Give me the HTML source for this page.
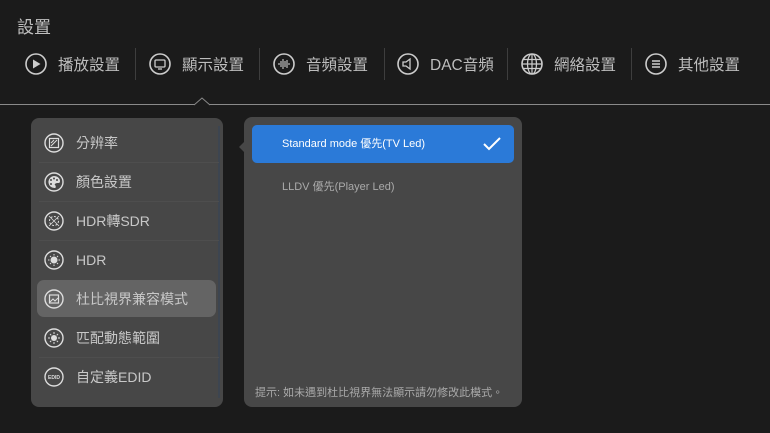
<!DOCTYPE html>
<html><head><meta charset="utf-8"><style>
*{margin:0;padding:0;box-sizing:border-box}
body{width:770px;height:433px;background:#1b1b1b;font-family:"Liberation Sans","Noto Sans CJK TC",sans-serif;position:relative;overflow:hidden;color:#ccc}
.t{position:absolute;left:17px;top:13px;font-size:17px;color:#c0c0c0}
.tab{position:absolute;top:52px;height:24px;display:flex;align-items:center;font-size:15.5px;color:#bdbdbd}
.tab svg{margin-right:11px}
.sep{position:absolute;top:48px;width:1px;height:32px;background:#3e3e3e}
.line{position:absolute;left:0;top:104px;width:770px;height:1px;background:#8a8a8a}
.p{position:absolute;background:#474747;border-radius:8px}
.row{position:absolute;left:6px;width:179px;height:37px;display:flex;align-items:center;font-size:14px;color:#c8c8c8}
.row svg{margin:0 12px 0 7px}
.row.sel{background:#646464;border-radius:7px}
.div{position:absolute;left:8px;width:180px;height:1px;background:#4e4e4e}
</style></head><body>
<div class="t">設置</div>
<div class="tab" style="left:25px"><svg width="22" height="22" viewBox="0 0 22 22"><circle cx="11" cy="11" r="10" fill="none" stroke="#ccc" stroke-width="1.6"/><path d="M8 6.5L15.5 11L8 15.5Z" fill="#ccc"/></svg>播放設置</div>
<div class="sep" style="left:135px"></div>
<div class="tab" style="left:149px"><svg width="22" height="22" viewBox="0 0 22 22"><circle cx="11" cy="11" r="10" fill="none" stroke="#ccc" stroke-width="1.6"/><rect x="6" y="7" width="10" height="7" rx="1" fill="none" stroke="#ccc" stroke-width="1.3"/><path d="M9 16h4" stroke="#ccc" stroke-width="1.3"/></svg>顯示設置</div>
<div class="sep" style="left:259px"></div>
<div class="tab" style="left:273px"><svg width="22" height="22" viewBox="0 0 22 22"><circle cx="11" cy="11" r="10" fill="none" stroke="#ccc" stroke-width="1.6"/><path d="M6 10v2M8 8v6M10 6v10M12 8v6M14 7v8M16 10v2" stroke="#ccc" stroke-width="1.1"/></svg>音頻設置</div>
<div class="sep" style="left:384px"></div>
<div class="tab" style="left:397px"><svg width="22" height="22" viewBox="0 0 22 22"><circle cx="11" cy="11" r="10" fill="none" stroke="#ccc" stroke-width="1.6"/><path d="M6 9h3l4-3v10l-4-3H6z" fill="none" stroke="#ccc" stroke-width="1.3"/></svg>DAC音頻</div>
<div class="sep" style="left:507px"></div>
<div class="tab" style="left:521px"><svg width="22" height="22" viewBox="0 0 22 22"><circle cx="11" cy="11" r="10" fill="none" stroke="#ccc" stroke-width="1.6"/><ellipse cx="11" cy="11" rx="4.5" ry="10" fill="none" stroke="#ccc" stroke-width="1.2"/><path d="M11 1v20M1 11h20M2.5 6.5h17M2.5 15.5h17" stroke="#ccc" stroke-width="1.2"/></svg>網絡設置</div>
<div class="sep" style="left:631px"></div>
<div class="tab" style="left:645px"><svg width="22" height="22" viewBox="0 0 22 22"><circle cx="11" cy="11" r="10" fill="none" stroke="#ccc" stroke-width="1.6"/><path d="M7 8h8M7 11h8M7 14h8" stroke="#ccc" stroke-width="1.5"/></svg>其他設置</div>
<div class="line"></div>
<svg style="position:absolute;left:194px;top:97px" width="16" height="9"><path d="M0 8L8 1L16 8" fill="#1b1b1b" stroke="#8a8a8a" stroke-width="1"/></svg>

<div class="p" style="left:31px;top:118px;width:192px;height:289px">
<div style="position:absolute;left:187px;top:8px;width:2px;height:272px;background:#3d4550"></div>
<div class="row" style="top:6px"><svg width="20" height="20" viewBox="0 0 20 20"><circle cx="10" cy="10" r="9" fill="none" stroke="#ddd" stroke-width="1.4"/><rect x="5.5" y="5.5" width="9" height="9" fill="none" stroke="#ddd" stroke-width="1.2"/><path d="M7 10l3-3M7 13l6-6" stroke="#ddd"/></svg>分辨率</div>
<div class="div" style="top:44px"></div>
<div class="row" style="top:45px"><svg width="20" height="20" viewBox="0 0 20 20"><circle cx="10" cy="10" r="9" fill="none" stroke="#ddd" stroke-width="1.4"/><path d="M10 4a6 6 0 1 0 1 12c1 0 1-2 0-3s1-2 3-2 2-1 2-2c0-3-3-5-6-5z" fill="#ddd"/><circle cx="7" cy="8" r="1" fill="#474747"/><circle cx="10" cy="6.5" r="1" fill="#474747"/><circle cx="13" cy="8" r="1" fill="#474747"/><circle cx="7" cy="12" r="1" fill="#474747"/></svg>顏色設置</div>
<div class="div" style="top:83px"></div>
<div class="row" style="top:84px"><svg width="20" height="20" viewBox="0 0 20 20"><circle cx="10" cy="10" r="9" fill="none" stroke="#ddd" stroke-width="1.4"/><circle cx="10" cy="10" r="4.5" fill="none" stroke="#ddd" stroke-dasharray="2 1.5"/><path d="M5 5l10 10M15 5L5 15" stroke="#ddd" stroke-width=".8"/></svg>HDR轉SDR</div>
<div class="div" style="top:122px"></div>
<div class="row" style="top:123px"><svg width="20" height="20" viewBox="0 0 20 20"><circle cx="10" cy="10" r="9" fill="none" stroke="#ddd" stroke-width="1.4"/><circle cx="10" cy="10" r="3.5" fill="#ddd"/><path d="M10 4v1.5M10 14.5V16M4 10h1.5M14.5 10H16M6 6l1 1M13 13l1 1M14 6l-1 1M6 14l1-1" stroke="#ddd"/></svg>HDR</div>
<div class="row sel" style="top:162px"><svg width="20" height="20" viewBox="0 0 20 20"><circle cx="10" cy="10" r="9" fill="none" stroke="#ddd" stroke-width="1.4"/><rect x="5.5" y="6" width="9" height="8" fill="none" stroke="#ddd" stroke-width="1.2"/><path d="M6 13l3-3 2 2 3-3" stroke="#ddd" fill="none"/></svg>杜比視界兼容模式</div>
<div class="row" style="top:201px"><svg width="20" height="20" viewBox="0 0 20 20"><circle cx="10" cy="10" r="9" fill="none" stroke="#ddd" stroke-width="1.4"/><circle cx="10" cy="10" r="3" fill="#ddd"/><path d="M10 4v2M10 14v2M4 10h2M14 10h2M6 6l1.3 1.3M12.7 12.7L14 14M14 6l-1.3 1.3M6 14l1.3-1.3" stroke="#ddd"/></svg>匹配動態範圍</div>
<div class="div" style="top:239px"></div>
<div class="row" style="top:240px"><svg width="20" height="20" viewBox="0 0 20 20"><circle cx="10" cy="10" r="9" fill="none" stroke="#ddd" stroke-width="1.4"/><text x="10" y="12" font-size="5" font-weight="bold" fill="#ddd" text-anchor="middle" font-family="Liberation Sans">EDID</text></svg>自定義EDID</div>
</div>

<div class="p" style="left:244px;top:117px;width:278px;height:290px">
<svg style="position:absolute;left:-5px;top:24px" width="6" height="12"><path d="M6 0L0 6L6 12Z" fill="#474747"/></svg>
<div style="position:absolute;left:8px;top:8px;width:262px;height:38px;background:#2b7ad8;border-radius:5px;color:#fff;font-size:11px;line-height:38px;padding-left:30px">Standard mode 優先(TV Led)
<svg style="position:absolute;left:231px;top:12px" width="18" height="14"><path d="M1 7l5 5L17 1" fill="none" stroke="#fff" stroke-width="2"/></svg></div>
<div style="position:absolute;left:38px;top:61px;font-size:11px;color:#aaa">LLDV 優先(Player Led)</div>
<div style="position:absolute;left:11px;top:267px;font-size:11px;color:#aaa">提示: 如未遇到杜比視界無法顯示請勿修改此模式。</div>
</div>
</body></html>
